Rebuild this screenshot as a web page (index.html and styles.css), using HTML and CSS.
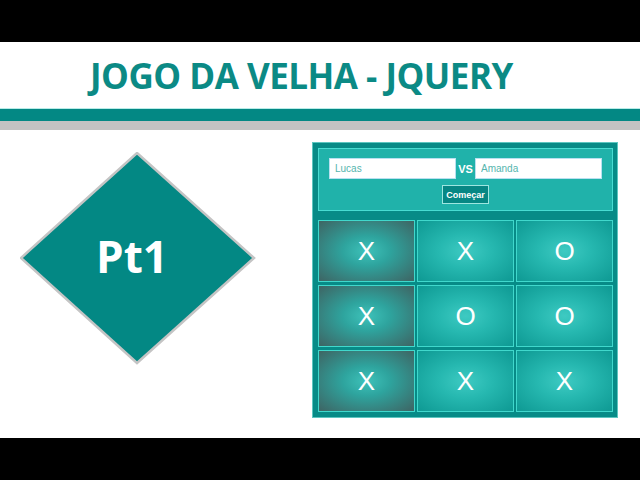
FILE: index.html
```html
<!DOCTYPE html>
<html lang="pt">

<head>
    <meta charset="UTF-8">
    <meta name="viewport"
          content="width=device-width, initial-scale=1.0">
    <title>Jogo da Velha - jQuery</title>
    <link rel="stylesheet" href="styles.css">
</head>

<body>
    <div class="letterbox"></div>
    <header class="top">
        <h1>JOGO DA VELHA - JQUERY</h1>
    </header>
    <div class="stripe teal"></div>
    <div class="stripe gray"></div>
    <main class="stage">
        <svg class="badge" width="236" height="214" viewBox="0 0 236 214">
            <polygon points="117,1 234,106 117,211 1,106" fill="#038884" stroke="#c4c4c4" stroke-width="2.5" />
            <text x="112" y="121" text-anchor="middle" class="badge-text">Pt1</text>
        </svg>
        <section class="game">
            <div class="players">
                <div class="names">
                    <input class="name" type="text" placeholder="Lucas">
                    <span class="vs">VS</span>
                    <input class="name" type="text" placeholder="Amanda">
                </div>
                <button class="start">Começar</button>
            </div>
            <div class="board">
                <div class="cell side">X</div>
                <div class="cell">X</div>
                <div class="cell">O</div>
                <div class="cell side">X</div>
                <div class="cell">O</div>
                <div class="cell">O</div>
                <div class="cell side">X</div>
                <div class="cell">X</div>
                <div class="cell">X</div>
            </div>
        </section>
    </main>
    <div class="letterbox"></div>
</body>

</html>
```

FILE: styles.css
```css
* {
    padding: 0;
    margin: 0;
    box-sizing: border-box;
}

body {
    width: 640px;
    height: 480px;
    background: #fff;
    overflow: hidden;
    font-family: "Liberation Sans", Arial, sans-serif;
}

.letterbox {
    height: 42px;
    background: #000;
}

.top {
    height: 66px;
    padding-left: 90px;
    padding-top: 14px;
}

.top h1 {
    font-family: "Open Sans", sans-serif;
    font-weight: 700;
    font-size: 35px;
    line-height: 40px;
    letter-spacing: -0.5px;
    color: #0b8a85;
}

.stripe.teal {
    height: 13px;
    background: #038884;
    border-top: 1px solid #b8ece8;
}

.stripe.gray {
    height: 9px;
    background: #c3c3c3;
}

.stage {
    height: 308px;
    display: flex;
    align-items: flex-start;
}

.badge {
    margin-top: 22px;
    margin-left: 20px;
    flex-shrink: 0;
}

.badge-text {
    font-family: "Open Sans", sans-serif;
    font-weight: 700;
    font-size: 44px;
    fill: #fff;
}

.game {
    margin-top: 12px;
    margin-left: 56px;
    width: 306px;
    height: 276px;
    background: #078b87;
    border: 1px solid #5cc6c0;
    padding: 5px 4px 0 5px;
}

.players {
    height: 63px;
    background: #20b2aa;
    border: 1px solid #48dcd2;
    padding-top: 9px;
    text-align: center;
}

.names {
    display: flex;
    align-items: center;
    justify-content: center;
    gap: 2px;
}

.name {
    width: 127px;
    height: 21px;
    border: 1px solid #b8e0f0;
    padding: 0 5px;
    font-size: 10px;
    font-family: "Liberation Sans", Arial, sans-serif;
    background: #fff;
}

.name::placeholder {
    color: #56b5ae;
}

.vs {
    font-size: 11px;
    font-weight: 700;
    color: #fff;
    width: 15px;
}

.start {
    margin-top: 6px;
    height: 19px;
    padding: 0 3px;
    background: #078784;
    color: #fff;
    border: 1px solid #9ee6e0;
    font-size: 9px;
    font-weight: 700;
    font-family: "Liberation Sans", Arial, sans-serif;
}

.board {
    margin-top: 9px;
    display: grid;
    grid-template-columns: repeat(3, 1fr);
    grid-auto-rows: 62px;
    gap: 3px 2px;
}

.cell {
    border: 1px solid #40d8cc;
    background: radial-gradient(ellipse at center, #3ecac2 0%, #26b8b0 40%, #0e9993 100%);
    color: #fff;
    font-size: 26px;
    display: flex;
    align-items: center;
    justify-content: center;
}

.cell.side {
    background: radial-gradient(ellipse at center, #3ec2ba 0%, #2ea49e 35%, #3e6463 100%);
}
```
